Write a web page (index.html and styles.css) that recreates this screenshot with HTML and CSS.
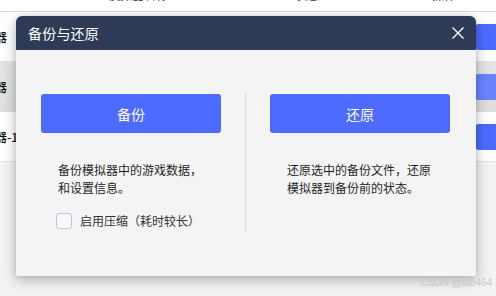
FILE: index.html
```html
<!DOCTYPE html>
<html lang="zh">
<head>
<meta charset="utf-8">
<link rel="stylesheet" href="styles.css">
</head>
<body>
<div class="page">
  <div class="table">
    <div class="thead">
      <span class="th th-name">模拟器名称</span>
      <span class="th th-mid">状态</span>
      <span class="th th-op">操作</span>
    </div>
    <div class="row">
      <span class="cell-name">模拟器</span>
      <span class="act"></span>
    </div>
    <div class="row row-hover">
      <span class="cell-name">模拟器</span>
      <span class="act act-hover"></span>
    </div>
    <div class="row">
      <span class="cell-name">模拟器-1</span>
      <span class="act"></span>
    </div>
  </div>
</div>

<div class="dialog">
  <div class="dlg-head">
    <span class="dlg-title">备份与还原</span>
    <svg class="dlg-close" width="12" height="12" viewBox="0 0 12 12">
      <path d="M0.5 0.5 L11.5 11.5 M11.5 0.5 L0.5 11.5" stroke="#ffffff" stroke-width="1.3" fill="none"/>
    </svg>
  </div>
  <div class="dlg-body">
    <div class="col col-left">
      <button class="btn">备份</button>
      <p class="desc">备份模拟器中的游戏数据，<br>和设置信息。</p>
      <label class="check">
        <span class="box"></span>
        <span class="check-text">启用压缩（耗时较长）</span>
      </label>
    </div>
    <div class="divider"></div>
    <div class="col col-right">
      <button class="btn">还原</button>
      <p class="desc">还原选中的备份文件，还原<br>模拟器到备份前的状态。</p>
    </div>
  </div>
</div>

<div class="watermark">CSDN @ld8464</div>
</body>
</html>
```

FILE: styles.css
```css
* { box-sizing: border-box; }

html, body {
  margin: 0;
  padding: 0;
}

body {
  width: 496px;
  height: 296px;
  overflow: hidden;
  background: #f3f3f3;
  font-family: "Noto Sans CJK SC", "Noto Sans", sans-serif;
  color: #222;
}

.page {
  width: 496px;
}

.table {
  background: #ffffff;
}

.thead {
  height: 12px;
  border-bottom: 1px solid #d9d9d9;
  position: relative;
  overflow: hidden;
  display: flex;
  font-size: 12px;
  color: #333;
}

.th {
  display: block;
  margin-top: -15px;
  line-height: 20px;
  white-space: nowrap;
}

.th-name { margin-left: 108px; }
.th-mid { margin-left: 127px; }
.th-op { margin-left: 113px; }

.row {
  height: 50px;
  border-bottom: 1px solid #e2e2e2;
  display: flex;
  align-items: center;
  justify-content: space-between;
  overflow: hidden;
  background: #ffffff;
}

.row-hover {
  background: linear-gradient(to bottom, #e4e4e4, #dedede);
}

.cell-name {
  margin-left: -29px;
  font-size: 12px;
  color: #111;
  white-space: nowrap;
  font-weight: 500;
}

.act {
  width: 40px;
  height: 26px;
  margin-right: -19px;
  border-radius: 4px;
  background: #4d6bfe;
}

.act-hover {
  background: #6a84ff;
}

.dialog {
  position: absolute;
  left: 16px;
  top: 16px;
  width: 460px;
  height: 260px;
  border-radius: 6px 6px 2px 2px;
  overflow: hidden;
  background: #f4f4f4;
  box-shadow: 0 4px 14px rgba(0, 0, 0, 0.28), 0 0 4px rgba(0, 0, 0, 0.1);
  display: flex;
  flex-direction: column;
}

.dlg-head {
  height: 34px;
  flex: none;
  background: #2e3a56;
  display: flex;
  align-items: center;
  justify-content: space-between;
  padding: 0 12px;
}

.dlg-title {
  color: #ffffff;
  font-size: 14px;
  letter-spacing: 0.2px;
}

.dlg-close {
  display: block;
}

.dlg-body {
  flex: 1;
  display: flex;
}

.col {
  display: flex;
  flex-direction: column;
  align-items: flex-start;
  padding-top: 44px;
}

.col-left {
  width: 229px;
  padding-left: 25px;
}

.col-right {
  width: 230px;
  padding-left: 24px;
}

.divider {
  width: 1px;
  margin: 42px 0 44px;
  background: #dcdcdc;
}

.btn {
  width: 180px;
  height: 39px;
  border: none;
  border-radius: 3px;
  background: #4d6bfe;
  color: #ffffff;
  font-family: "Noto Sans CJK SC", sans-serif;
  font-size: 14px;
  padding: 0;
}

.desc {
  margin: 28px 0 0 17px;
  font-size: 12px;
  line-height: 18px;
  color: #1f1f1f;
}

.check {
  display: flex;
  align-items: center;
  margin: 15px 0 0 15px;
}

.box {
  width: 16px;
  height: 16px;
  border: 1px solid #c3c6d4;
  border-radius: 3px;
  background: #f9faff;
}

.check-text {
  margin-left: 8px;
  font-size: 12px;
  color: #333;
}

.watermark {
  position: absolute;
  right: 4px;
  top: 277px;
  font-family: "Liberation Sans", sans-serif;
  font-size: 10px;
  line-height: 12px;
  color: #c8c8c8;
  white-space: nowrap;
}
```
